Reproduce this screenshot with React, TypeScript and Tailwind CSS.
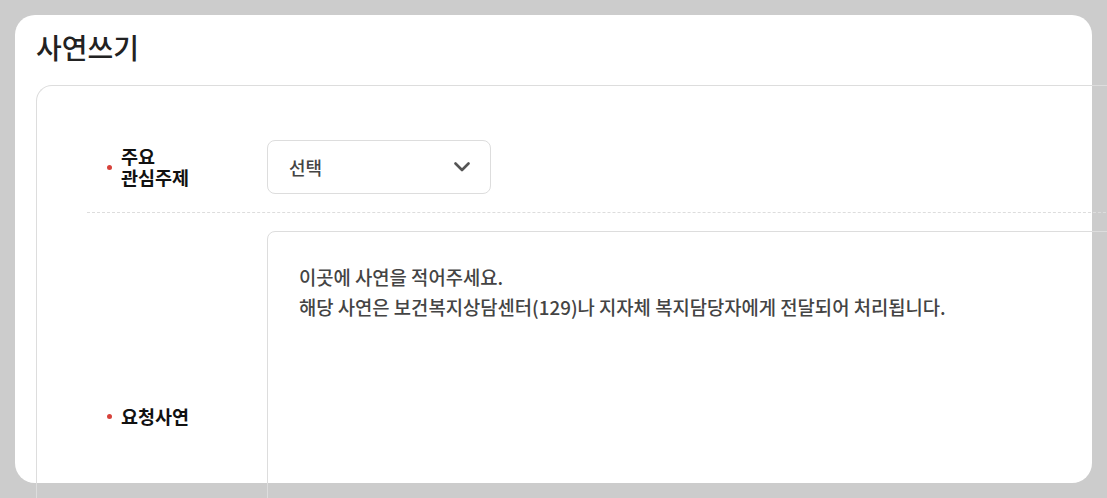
const FONT = { fontFamily: '"Noto Sans CJK KR", "Noto Sans", sans-serif' };

function Bullet() {
  return <span className="mr-[9px] inline-block h-[5px] w-[5px] shrink-0 rounded-full bg-[#d7423b]" />;
}

export default function App() {
  return (
    <div className="h-[498px] overflow-hidden bg-[#cccccc] p-[15px]" style={FONT}>
      <div className="h-[468px] w-[1077px] rounded-[20px] bg-white pl-[21px]">
        {/* 제목 */}
        <h1 className="pt-[12px] text-[28px] leading-[40px] font-medium text-[#222]">사연쓰기</h1>

        {/* 입력 영역 */}
        <div className="mt-[18px] w-[1120px] rounded-tl-[16px] border-t border-l border-[#dddddd] pt-[36px] pl-[50px]">
          <div className="flex border-b border-dashed border-[#dddddd] py-[18px]">
            <div className="flex w-[180px] items-center pl-[20px]">
              <Bullet />
              <span className="text-[18.5px] leading-[21px] font-bold text-[#111]">
                주요
                <br />
                관심주제
              </span>
            </div>
            <button className="flex h-[54px] w-[224px] items-center justify-between rounded-[8px] border border-[#dddddd] pr-[20px] pl-[21px] text-[18px] font-medium text-[#444]">
              <span>선택</span>
              <svg width="16" height="10" viewBox="0 0 16 10" fill="none">
                <polyline
                  points="1.5,1.5 8,8 14.5,1.5"
                  stroke="#555"
                  strokeWidth="2.6"
                  strokeLinecap="round"
                  strokeLinejoin="round"
                />
              </svg>
            </button>
          </div>

          <div className="flex pt-[18px]">
            <div className="flex w-[180px] items-center pl-[20px]">
              <Bullet />
              <span className="text-[18.5px] leading-[20px] font-bold text-[#111]">요청사연</span>
            </div>
            <textarea
              className="h-[370px] flex-1 resize-none rounded-tl-[8px] border border-[#dddddd] px-[31px] pt-[30px] text-[18.8px] leading-[30px] font-medium text-[#444] outline-none placeholder:text-[#444]"
              placeholder={'이곳에 사연을 적어주세요.\n해당 사연은 보건복지상담센터(129)나 지자체 복지담당자에게 전달되어 처리됩니다.'}
            />
          </div>
        </div>
      </div>
    </div>
  );
}
